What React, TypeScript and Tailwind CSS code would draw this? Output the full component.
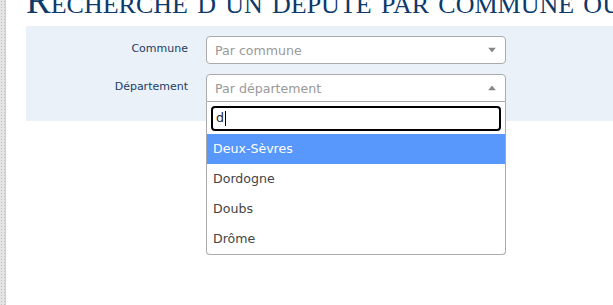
const sans = "font-['DejaVu_Sans',Verdana,sans-serif]";

function Arrow({ up }: { up?: boolean }) {
  return (
    <svg width="8" height="5" viewBox="0 0 8 5" className="absolute right-[9px] top-1/2 -translate-y-1/2">
      {up ? <path d="M0 5 L4 0 L8 5 Z" fill="#888" /> : <path d="M0 0 L8 0 L4 5 Z" fill="#888" />}
    </svg>
  );
}

const options = ["Deux-Sèvres", "Dordogne", "Doubs", "Drôme"];

export default function App() {
  return (
    <div className="flex h-[305px] w-[613px] overflow-hidden bg-white">
      <div className="w-[6px] shrink-0 border-r border-[#cfcfcf] bg-[#e4e4e4] bg-[radial-gradient(#c4c4c4_0.8px,transparent_0.9px)] bg-[length:3px_3px]" />
      <div className="flex min-w-0 flex-1 flex-col pl-[20px]">
        <h1 className="mt-[-18px] h-[44px] whitespace-nowrap font-['Liberation_Serif',serif] text-[37px] leading-[37px] text-[#0c3a6a] [font-variant:small-caps]">
          Recherche d un depute par commune ou par departement
        </h1>
        <div className={`flex flex-col gap-[10px] bg-[#eaf1f9] pt-[10px] pb-[19px] ${sans}`}>
          <div className="flex items-center">
            <label className="w-[162px] text-right text-[11px] leading-none text-[#1c3d62] -mt-[3px]">Commune</label>
            <div className="relative ml-[18px] flex h-[28px] w-[300px] items-center rounded-[4px] border border-[#aaa] bg-white pl-[8px] pt-[2px] text-[12.6px] text-[#999]">
              Par commune
              <Arrow />
            </div>
          </div>
          <div className="flex items-center">
            <label className="w-[162px] text-right text-[11px] leading-none text-[#1c3d62] -mt-[3px]">Département</label>
            <div className="relative ml-[18px] w-[300px]">
              <div className="relative flex h-[28px] items-center rounded-t-[4px] border border-[#aaa] bg-white pl-[8px] pt-[2px] text-[12.6px] text-[#999]">
                Par département
                <Arrow up />
              </div>
              <div className="absolute top-full left-0 z-10 w-full rounded-b-[4px] border border-t-0 border-[#aaa] bg-white">
                <div className="px-[4px] pt-[4px] pb-[3px]">
                  <div className="flex h-[25px] items-center rounded-[4px] border-2 border-black px-[3px] text-[12.6px] text-[#222]">
                    d<span className="ml-px h-[15px] w-px bg-black" />
                  </div>
                </div>
                {options.map((o, i) => (
                  <div
                    key={o}
                    className={`flex h-[30px] items-center pl-[6px] text-[12.6px] ${i === 0 ? "bg-[#5897fb] text-white" : "text-[#444]"}`}
                  >
                    {o}
                  </div>
                ))}
              </div>
            </div>
          </div>
        </div>
      </div>
    </div>
  );
}
